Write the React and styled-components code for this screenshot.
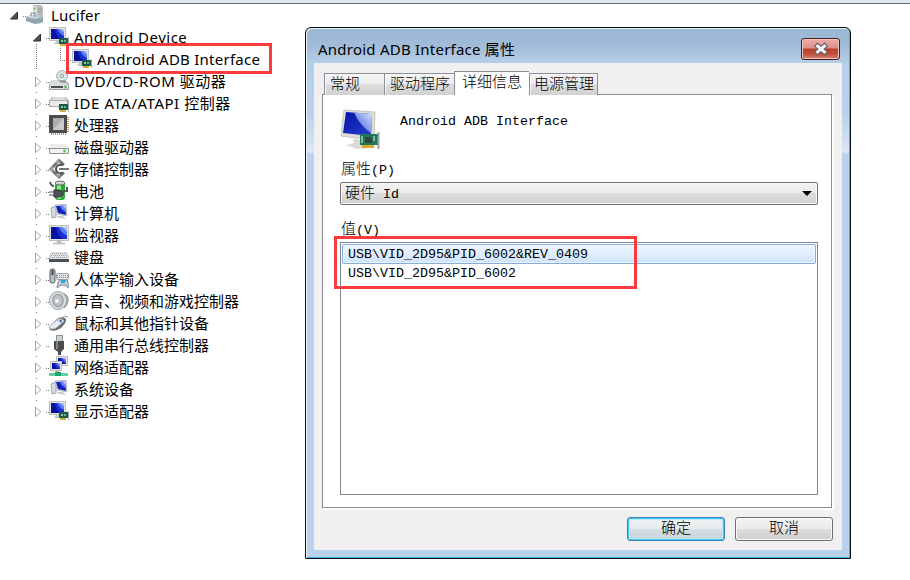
import React from "react";
import styled, { createGlobalStyle, css } from "styled-components";

const GlobalStyle = createGlobalStyle`
  body { margin: 0; background: #fff; }
  * { box-sizing: border-box; }
`;

const Screen = styled.div`
  position: relative;
  width: 910px;
  height: 580px;
  overflow: hidden;
  background: #fff;
  color: #000;
`;

const Tree = styled.div`
  height: 580px;
  border-top: 1px solid #6a6e75;
  font: 15px/22px "Noto Sans", "Noto Sans CJK SC", sans-serif;
`;

const TopStrip = styled.div`
  height: 3px;
  background: #dce7f3;
`;

const TreeRow = styled.div`
  display: flex;
  align-items: center;
  height: 22px;
  padding-left: ${(p) => 9 + p.$depth * 23}px;
  white-space: nowrap;
`;

const Branch = styled.svg`
  flex: none;
  width: 17px;
  height: 22px;
  overflow: visible;
`;

const DeviceIcon = styled.svg`
  flex: none;
  width: 20px;
  height: 20px;
  margin-right: 5px;
  overflow: visible;
`;

const Label = styled.span`
  letter-spacing: ${(p) => p.$track || 0}px;
`;

const Highlight = styled.div`
  position: absolute;
  border: 3px solid #fb3b3b;
  left: ${(p) => p.$x}px;
  top: ${(p) => p.$y}px;
  width: ${(p) => p.$w}px;
  height: ${(p) => p.$h}px;
`;

const Dialog = styled.div`
  position: absolute;
  left: 305px;
  top: 27px;
  width: 546px;
  height: 532px;
  display: flex;
  flex-direction: column;
  padding: 1px 7px 7px 7px;
  border: 1px solid #0a0c0f;
  border-radius: 6px 6px 0 0;
  background:
    linear-gradient(to bottom, #9ab6d3 0, #a2bcd9 18px, #b7d0ea 36px, #b9d1ea 85px, #dbe7f5 124px, #b9d1ea 126px, #b9d1ea 100%);
  box-shadow: inset 1px 1px 0 #e9f3fa, inset -1px -1px 0 #3ab9d4;
`;

const TitleBar = styled.div`
  display: flex;
  flex: none;
  height: 34px;
  padding: 0 3px 0 5px;
`;

const Title = styled.div`
  flex: 1;
  padding-top: 9px;
  font: 15px/22px "Noto Sans", "Noto Sans CJK SC", sans-serif;
  letter-spacing: 0.23px;
`;

const CloseButton = styled.button`
  width: 39px;
  height: 22px;
  margin-top: 9px;
  padding: 0;
  border: 1px solid #4c1c23;
  border-radius: 3px;
  background: linear-gradient(#eaaea6 0, #df9186 9px, #ba3e29 10px, #c0503d 15px, #d98473 100%);
  box-shadow: inset 0 0 0 1px #efc4bc;
  display: grid;
  place-items: center;
`;

const Client = styled.div`
  flex: 1;
  display: flex;
  flex-direction: column;
  margin: 0 1px 1px;
  padding: 8px;
  background: #f0f0f0;
  font: 300 15px/20px "Liberation Mono", "Noto Sans CJK SC", monospace;
`;

const Tabs = styled.div`
  display: flex;
  align-items: flex-end;
  flex: none;
  height: 24px;
  padding-left: 2px;
  position: relative;
`;

const Tab = styled.div`
  flex: none;
  width: ${(p) => p.$w}px;
  height: 22px;
  padding: 2px 0 0 ${(p) => (p.$last ? 4 : 5)}px;
  border: 1px solid #8b8c95;
  border-right-width: ${(p) => (p.$last ? 1 : 0)}px;
  border-bottom: 0;
  background: linear-gradient(#f3f3f3 0, #ececec 48%, #dedede 50%, #d1d1d1 100%);
  box-shadow: inset 1px 1px 0 #fafafa;
  white-space: nowrap;
  ${(p) =>
    p.$active &&
    css`
      height: 24px;
      padding-left: 7px;
      background: #fff;
      border-right-width: 0;
    `}
`;

const Panel = styled.div`
  flex: none;
  width: 510px;
  height: 414px;
  padding: 14px 13px 12px 17px;
  border: 1px solid #8b8c95;
  background: #fff;
  box-shadow: 2px 2px 0 #fdfdfd;
  display: flex;
  flex-direction: column;
  margin-top: -1px;
`;

const Half = styled.span`
  font-size: 13.333px;
  white-space: pre;
`;

const DeviceHeader = styled.div`
  display: flex;
  height: 50px;
  line-height: 25px;
`;

const LargeIcon = styled.svg`
  width: 41px;
  height: 42px;
  margin-right: 19px;
`;

const FieldLabel = styled.div`
  height: 23px;
  padding-top: 2px;
  padding-left: 1px;
`;

const Combo = styled.div`
  display: flex;
  align-items: center;
  justify-content: space-between;
  flex: none;
  height: 23px;
  margin-bottom: 14px;
  padding: 0 5px 0 4px;
  border: 1px solid #707070;
  border-radius: 2px;
  background: linear-gradient(#f2f2f2 0, #ebebeb 48%, #dddddd 50%, #cfcfcf 100%);
  box-shadow: inset 0 0 0 1px #f8f8f8;
`;

const ComboText = styled.span`
  padding-top: 3px;
`;

const ValueList = styled.div`
  flex: none;
  height: 253px;
  padding: 1px;
  border: 1px solid #828790;
`;

const Value = styled.div`
  height: 20px;
  padding-left: 5px;
  line-height: ${(p) => (p.$selected ? 20 : 18)}px;
  border: 1px solid transparent;
  border-radius: 2px;
  ${(p) =>
    p.$selected &&
    css`
      border-color: #84acdd;
      background: linear-gradient(#eff6ff, #cfe3fd);
      box-shadow: inset 0 0 0 1px #edf5ff;
    `}
`;

const Actions = styled.div`
  display: flex;
  justify-content: flex-end;
  gap: 10px;
  margin-top: 9px;
  padding-right: 1px;
`;

const Button = styled.button`
  width: 98px;
  height: 24px;
  padding: 2px 0 0;
  border: 1px solid #707070;
  border-radius: 3px;
  background: linear-gradient(#f2f2f2 0, #ebebeb 48%, #dddddd 50%, #cfcfcf 100%);
  box-shadow: inset 0 0 0 1px #f8f8f8;
  font: inherit;
  line-height: 20px;
  color: #000;
  ${(p) =>
    p.$primary &&
    css`
      border-color: #3c7fb1;
      background: linear-gradient(#f0f3f4 0, #e6ebee 48%, #d5dee3 50%, #c9d2d7 100%);
      box-shadow: inset 0 0 0 1px #43cdf2, inset 0 0 0 2px #b5e6f5;
    `}
`;

const Screenlet = ({ x = 0, y = 0, w = 17, h = 14 }) => (
  <g transform={`translate(${x} ${y})`}>
    <rect x=".5" y=".5" width={w - 1} height={h - 1} fill="#e5e4dc" stroke="#c0c1bc" />
    <rect x="2" y="2" width={w - 4} height={h - 4} fill="#1c2fd0" />
    <path d={`M2 2H${w * 0.35}Q${w * 0.4} ${h * 0.6} ${w * 0.7} ${h - 2}H2Z`} fill="#0a12a0" />
    <path d={`M${w * 0.5} 2H${w - 2}V${h * 0.65}Q${w * 0.6} ${h * 0.5} ${w * 0.5} 2Z`} fill="#5b7ff0" />
    <path d={`M${w * 0.65} 2H${w - 2}V${h * 0.4}Z`} fill="#a9c0fa" />
  </g>
);

const Card = () => (
  <g>
    <rect x="10" y="11" width="9" height="6" fill="#1c5a48" />
    <rect x="12" y="13" width="2" height="2" fill="#8fc6a8" />
    <rect x="15" y="13" width="2" height="2" fill="#6fae8d" />
    <path d="M19.5 10V19" stroke="#a5adb1" />
    <path d="M11 18H17" stroke="#dda934" strokeWidth="2" />
  </g>
);

const icons = {
  computer: (
    <g>
      <path d="M7 0L15 0 17 2V17L12 19 7 16Z" fill="#b8bdbe" />
      <path d="M7 0L11 2V17L7 15Z" fill="#d9dddd" />
      <path d="M12 4H16M12 7H16" stroke="#8f9899" />
      <circle cx="8.5" cy="3.5" r="1" fill="#54bd3f" />
      <path d="M0 12L5 10 17 12V17L9 19 0 16Z" fill="#91a5ae" />
      <path d="M0 12L5 10 17 12 9 14Z" fill="#c8d6da" />
      <path d="M5 11V8H9V12" fill="none" stroke="#7a878c" />
    </g>
  ),
  device: (
    <g>
      <Screenlet />
      <path d="M7 14H11L12 17H5Z" fill="#c4c7c7" />
      <Card />
    </g>
  ),
  optical: (
    <g>
      <circle cx="13" cy="5" r="5.5" fill="#dfe5e7" stroke="#adb3b5" />
      <path d="M10 0L13 5 16 0M8 7L13 5 17 9" stroke="#b7d5c7" fill="none" />
      <circle cx="13" cy="5" r="1.5" fill="#fff" stroke="#999" />
      <path d="M3 9H16L20 13V19H0V13Z" fill="#9ea3a5" />
      <path d="M3 9H9L12 12H17L20 14H0Z" fill="#d9dcdc" />
      <rect x="1" y="14" width="18" height="4" fill="#dfe2e2" />
      <path d="M2 16H14" stroke="#4b5254" strokeWidth="2" />
      <path d="M16.5 14.5V17.5" stroke="#39bb43" strokeWidth="2" />
    </g>
  ),
  ide: (
    <g>
      <path d="M3 4H17L20 8V14H0V8Z" fill="#a9adae" />
      <path d="M4 4H16L18 7H2Z" fill="#dcdfdf" />
      <rect x="1" y="8" width="17" height="5" rx="1" fill="#e9eaea" />
      <Card />
    </g>
  ),
  cpu: (
    <g>
      <path d="M19 2V18M2 19H18" stroke="#c89743" strokeWidth="2" strokeDasharray="1 1" />
      <rect width="18" height="18" fill="#4b4c4b" />
      <rect x="4" y="3" width="11" height="12" fill="#aeb0ae" />
      <path d="M4 15L15 3V15Z" fill="#c9cbc8" />
    </g>
  ),
  disk: (
    <g>
      <path d="M3 7H17L20 11V17H0V11Z" fill="#c3c7c8" />
      <path d="M3 7H17L20 11H0Z" fill="#eceeee" />
      <rect x=".5" y="11.5" width="19" height="5" rx="1.5" fill="#f2f2f2" stroke="#909496" />
      <path d="M15.5 12.5V15.5" stroke="#43c445" strokeWidth="2" />
    </g>
  ),
  storage: (
    <g fill="none">
      <path d="M15 6L10 1.5 1.8 10 10 18 15 13.5" stroke="#767676" strokeWidth="2.8" />
      <path d="M10 1.5L7.5 4M4 8L1.8 10 4 12M7.5 15.5L10 18" stroke="#a2a2a2" strokeWidth="2.8" />
      <path d="M14 6Q7 5 7 10Q7 15 14 14" stroke="#4f4f4f" strokeWidth="2" />
      <path d="M10 10H20" stroke="#777" strokeWidth="2" />
    </g>
  ),
  battery: (
    <g>
      <rect x="6" y="1" width="10" height="18" rx="3" fill="#28aa35" />
      <rect x="8" y="4" width="4" height="14" rx="2" fill="#9be591" />
      <ellipse cx="11" cy="2" rx="5" ry="2" fill="#c9d4cc" stroke="#657468" />
      <path d="M1 1Q2 5 5 5M14 10H18V6" stroke="#555" strokeWidth="2" fill="none" />
      <path d="M5 9H11L14 11V14L10 16H5Z" fill="#4c5352" stroke="#303635" />
      <path d="M0 11H6M0 14H6" stroke="#4c5352" />
    </g>
  ),
  pc: (
    <g>
      <path d="M2 5L7 3V14L3 15Z" fill="#d7dadb" stroke="#a9adaf" />
      <path d="M6 2L17 1.5 18 13 8 11Z" fill="#dfe2e2" stroke="#b9bdbe" />
      <path d="M7 3L16 2.5 17 12 9 10Z" fill="#1220bb" />
      <path d="M11 2.8L16 2.5 16.7 9Q12 7 11 2.8Z" fill="#5f82f0" />
      <path d="M13.5 2.7L16 2.5 16.3 6Z" fill="#b4c8fb" />
      <path d="M9 13L14 13 17 16 8 14.5Z" fill="#c6cacc" />
    </g>
  ),
  monitor: (
    <g>
      <Screenlet w={20} h={16} />
      <path d="M8 16H12V18H8Z" fill="#b2b5b4" />
      <path d="M4 18.5H16" stroke="#c6c8c7" strokeWidth="2" />
    </g>
  ),
  keyboard: (
    <g>
      <path d="M3 5H17L20 10V15H0V10Z" fill="#4b5054" />
      <path d="M3 5H17L20 10V12H0V10Z" fill="#e1e4e5" />
      <path d="M3 6.5H17M2 8.5H18M1 10.5H19" stroke="#979da0" strokeDasharray="1 1" />
    </g>
  ),
  input: (
    <g>
      <rect x="1" y="0" width="5" height="14" rx="2" fill="#b9c0c3" stroke="#596267" />
      <path d="M3.5 1V6" stroke="#454b4d" strokeWidth="2" />
      <rect x="7.5" y="4.5" width="12" height="6" rx="1" fill="#e3e6e8" stroke="#9da4a7" />
      <path d="M8 6.5H19M8 8.5H19" stroke="#8b9296" strokeDasharray="1 1" />
      <path d="M8 19Q9 10 12 11L15 12 18 11Q20 15 19 19L16 16H12Z" fill="#c6cfd4" stroke="#7d878d" />
      <rect x="12" y="11" width="4" height="3" fill="#22a9df" />
    </g>
  ),
  speaker: (
    <g>
      <path d="M14 2Q20 5 19 9Q19 14 15 17" fill="#b6bdc1" stroke="#858e94" />
      <ellipse cx="9" cy="9.5" rx="8.5" ry="9" fill="#dde1e3" stroke="#9ba2a6" />
      <ellipse cx="9" cy="9.5" rx="6" ry="7" fill="#a3acb1" />
      <ellipse cx="9" cy="9.5" rx="4" ry="5" fill="#bdc4c8" />
      <circle cx="8" cy="10" r="2" fill="#eef0f1" />
    </g>
  ),
  mouse: (
    <g>
      <path d="M0 14L9 5Q15 3 17 6Q18 9 12 15Q6 19 1 17Z" fill="#666d77" />
      <path d="M1 13L9 6Q14 5 15 8L7 15Q3 17 0 15Z" fill="#eceef1" stroke="#b1b7be" />
      <path d="M8 7L13 10" stroke="#9fa6af" />
      <path d="M11 7L12.5 8.5" stroke="#2d6ec7" strokeWidth="2" />
      <path d="M14 5Q14 2 19 4" stroke="#91979b" fill="none" />
    </g>
  ),
  usb: (
    <g>
      <rect x="7.5" y=".5" width="6" height="6" fill="#ccd1d3" stroke="#8d9496" />
      <path d="M5 6H15V14L12 17V20H9V17L5 14Z" fill="#4b4e51" />
      <path d="M7 6H9V14H7Z" fill="#83878a" />
    </g>
  ),
  network: (
    <g>
      <Screenlet x={7} y={-1} w={12} h={10} />
      <Screenlet x={1} y={4} w={12} h={10} />
      <path d="M8 14V17" stroke="#8fae9f" strokeWidth="3" />
      <path d="M0 17.5H19" stroke="#5fd0a2" strokeWidth="3" />
      <rect x="6" y="15" width="6" height="4" fill="#22a66c" />
    </g>
  ),
};

const devices = [
  { name: "Lucifer", icon: "computer", depth: 0, state: "open", track: 0.15 },
  { name: "Android Device", icon: "device", state: "open", track: 0.5 },
  { name: "Android ADB Interface", icon: "device", depth: 2, state: "leaf", track: 0.25 },
  { name: "DVD/CD-ROM 驱动器", icon: "optical", track: 0.5 },
  { name: "IDE ATA/ATAPI 控制器", icon: "ide", track: 0.53 },
  { name: "处理器", icon: "cpu" },
  { name: "磁盘驱动器", icon: "disk" },
  { name: "存储控制器", icon: "storage" },
  { name: "电池", icon: "battery" },
  { name: "计算机", icon: "pc" },
  { name: "监视器", icon: "monitor" },
  { name: "键盘", icon: "keyboard" },
  { name: "人体学输入设备", icon: "input" },
  { name: "声音、视频和游戏控制器", icon: "speaker" },
  { name: "鼠标和其他指针设备", icon: "mouse" },
  { name: "通用串行总线控制器", icon: "usb" },
  { name: "网络适配器", icon: "network" },
  { name: "系统设备", icon: "pc" },
  { name: "显示适配器", icon: "device" },
];

function TreeBranch({ state, depth, last }) {
  return (
    <Branch viewBox="0 0 17 22" shapeRendering={state === "leaf" ? "crispEdges" : "auto"}>
      {state === "open" && (
        <path
          transform={depth === 0 ? "translate(-2 0.5)" : "translate(-2 0.5)"}
          d="M10.5 7.5V14.5H3.5Z"
          fill="#505050"
          stroke="#2d2d2d"
        />
      )}
      {state === "closed" && (
        <>
          <path d="M3.5 7V16.5L8.8 11.7Z" fill="#fff" stroke="#a3a3a3" />
          {!last && <path d="M4 22.5H5" stroke="#777" />}
        </>
      )}
      {state === "leaf" ? (
        <path d="M-18.5 -4V22M5.5 0V12M5 12.5H17" fill="none" stroke="#777" strokeDasharray="1 1" />
      ) : (
        <path d="M14 12.5H17" stroke="#777" strokeDasharray="1 1" />
      )}
    </Branch>
  );
}

export default function App() {
  return (
    <Screen>
      <GlobalStyle />
      <TopStrip />
      <Tree>
        {devices.map(({ name, icon, depth = 1, state = "closed", track }, i) => (
          <TreeRow key={name} $depth={depth}>
            <TreeBranch state={state} depth={depth} last={i === devices.length - 1} />
            <DeviceIcon viewBox="0 0 20 20">{icons[icon]}</DeviceIcon>
            <Label $track={track}>{name}</Label>
          </TreeRow>
        ))}
      </Tree>
      <Highlight $x={66} $y={43} $w={206} $h={31} />
      <Dialog>
        <TitleBar>
          <Title>Android ADB Interface 属性</Title>
          <CloseButton aria-label="关闭">
            <svg width="16" height="14" viewBox="0 0 16 14">
              <path d="M4.5 4L11.5 10M11.5 4L4.5 10" stroke="#55556a" strokeWidth="5" strokeLinecap="square" />
              <path d="M4.5 4L11.5 10M11.5 4L4.5 10" stroke="#f5f5f6" strokeWidth="3" strokeLinecap="square" />
            </svg>
          </CloseButton>
        </TitleBar>
        <Client>
          <Tabs>
            <Tab $w={60}>常规</Tab>
            <Tab $w={70}>驱动程序</Tab>
            <Tab $w={75} $active>详细信息</Tab>
            <Tab $w={69} $last>电源管理</Tab>
          </Tabs>
          <Panel>
            <DeviceHeader>
              <LargeIcon viewBox="0 0 41 42">
                <defs>
                  <linearGradient id="glass" x1="0" y1="0" x2="1" y2="1">
                    <stop offset="0" stopColor="#0713a4" />
                    <stop offset="1" stopColor="#263fd0" />
                  </linearGradient>
                  <linearGradient id="shine" x1="0" y1="1" x2="1" y2="0">
                    <stop offset="0" stopColor="#2f4bd8" />
                    <stop offset="1" stopColor="#dbe6fe" />
                  </linearGradient>
                </defs>
                <path d="M4 1L35 3 34 31 1 27Z" fill="#deded7" stroke="#c6c6bf" />
                <path d="M6 3L32 5 31 27 3 24Z" fill="url(#glass)" />
                <path d="M14 3.6L32 5 31 24Q20 17 14 3.6Z" fill="url(#shine)" />
                <path d="M13 30L24 31 25 36 30 39 17 40 6 36 14 34Z" fill="#d9dada" />
                <rect x="20" y="25" width="18" height="11" fill="#23785a" />
                <rect x="25" y="28" width="7" height="6" fill="#304944" />
                <path d="M22 27V34M34 27V32" stroke="#89b99d" strokeWidth="2" />
                <path d="M22 37.5H34" stroke="#dba92e" strokeWidth="3" />
                <path d="M38.5 23V40" stroke="#9ba5ad" strokeWidth="2" />
              </LargeIcon>
              <Half>Android ADB Interface</Half>
            </DeviceHeader>
            <FieldLabel>属性<Half>(P)</Half></FieldLabel>
            <Combo>
              <ComboText>硬件<Half> Id</Half></ComboText>
              <svg width="10" height="6" viewBox="0 0 10 6">
                <path d="M0 0H10L5 5Z" fill="#000" />
              </svg>
            </Combo>
            <FieldLabel>值<Half>(V)</Half></FieldLabel>
            <ValueList>
              <Value $selected><Half>USB\VID_2D95&amp;PID_6002&amp;REV_0409</Half></Value>
              <Value><Half>USB\VID_2D95&amp;PID_6002</Half></Value>
            </ValueList>
          </Panel>
          <Actions>
            <Button $primary>确定</Button>
            <Button>取消</Button>
          </Actions>
        </Client>
      </Dialog>
      <Highlight $x={334} $y={236} $w={303} $h={53} />
    </Screen>
  );
}
